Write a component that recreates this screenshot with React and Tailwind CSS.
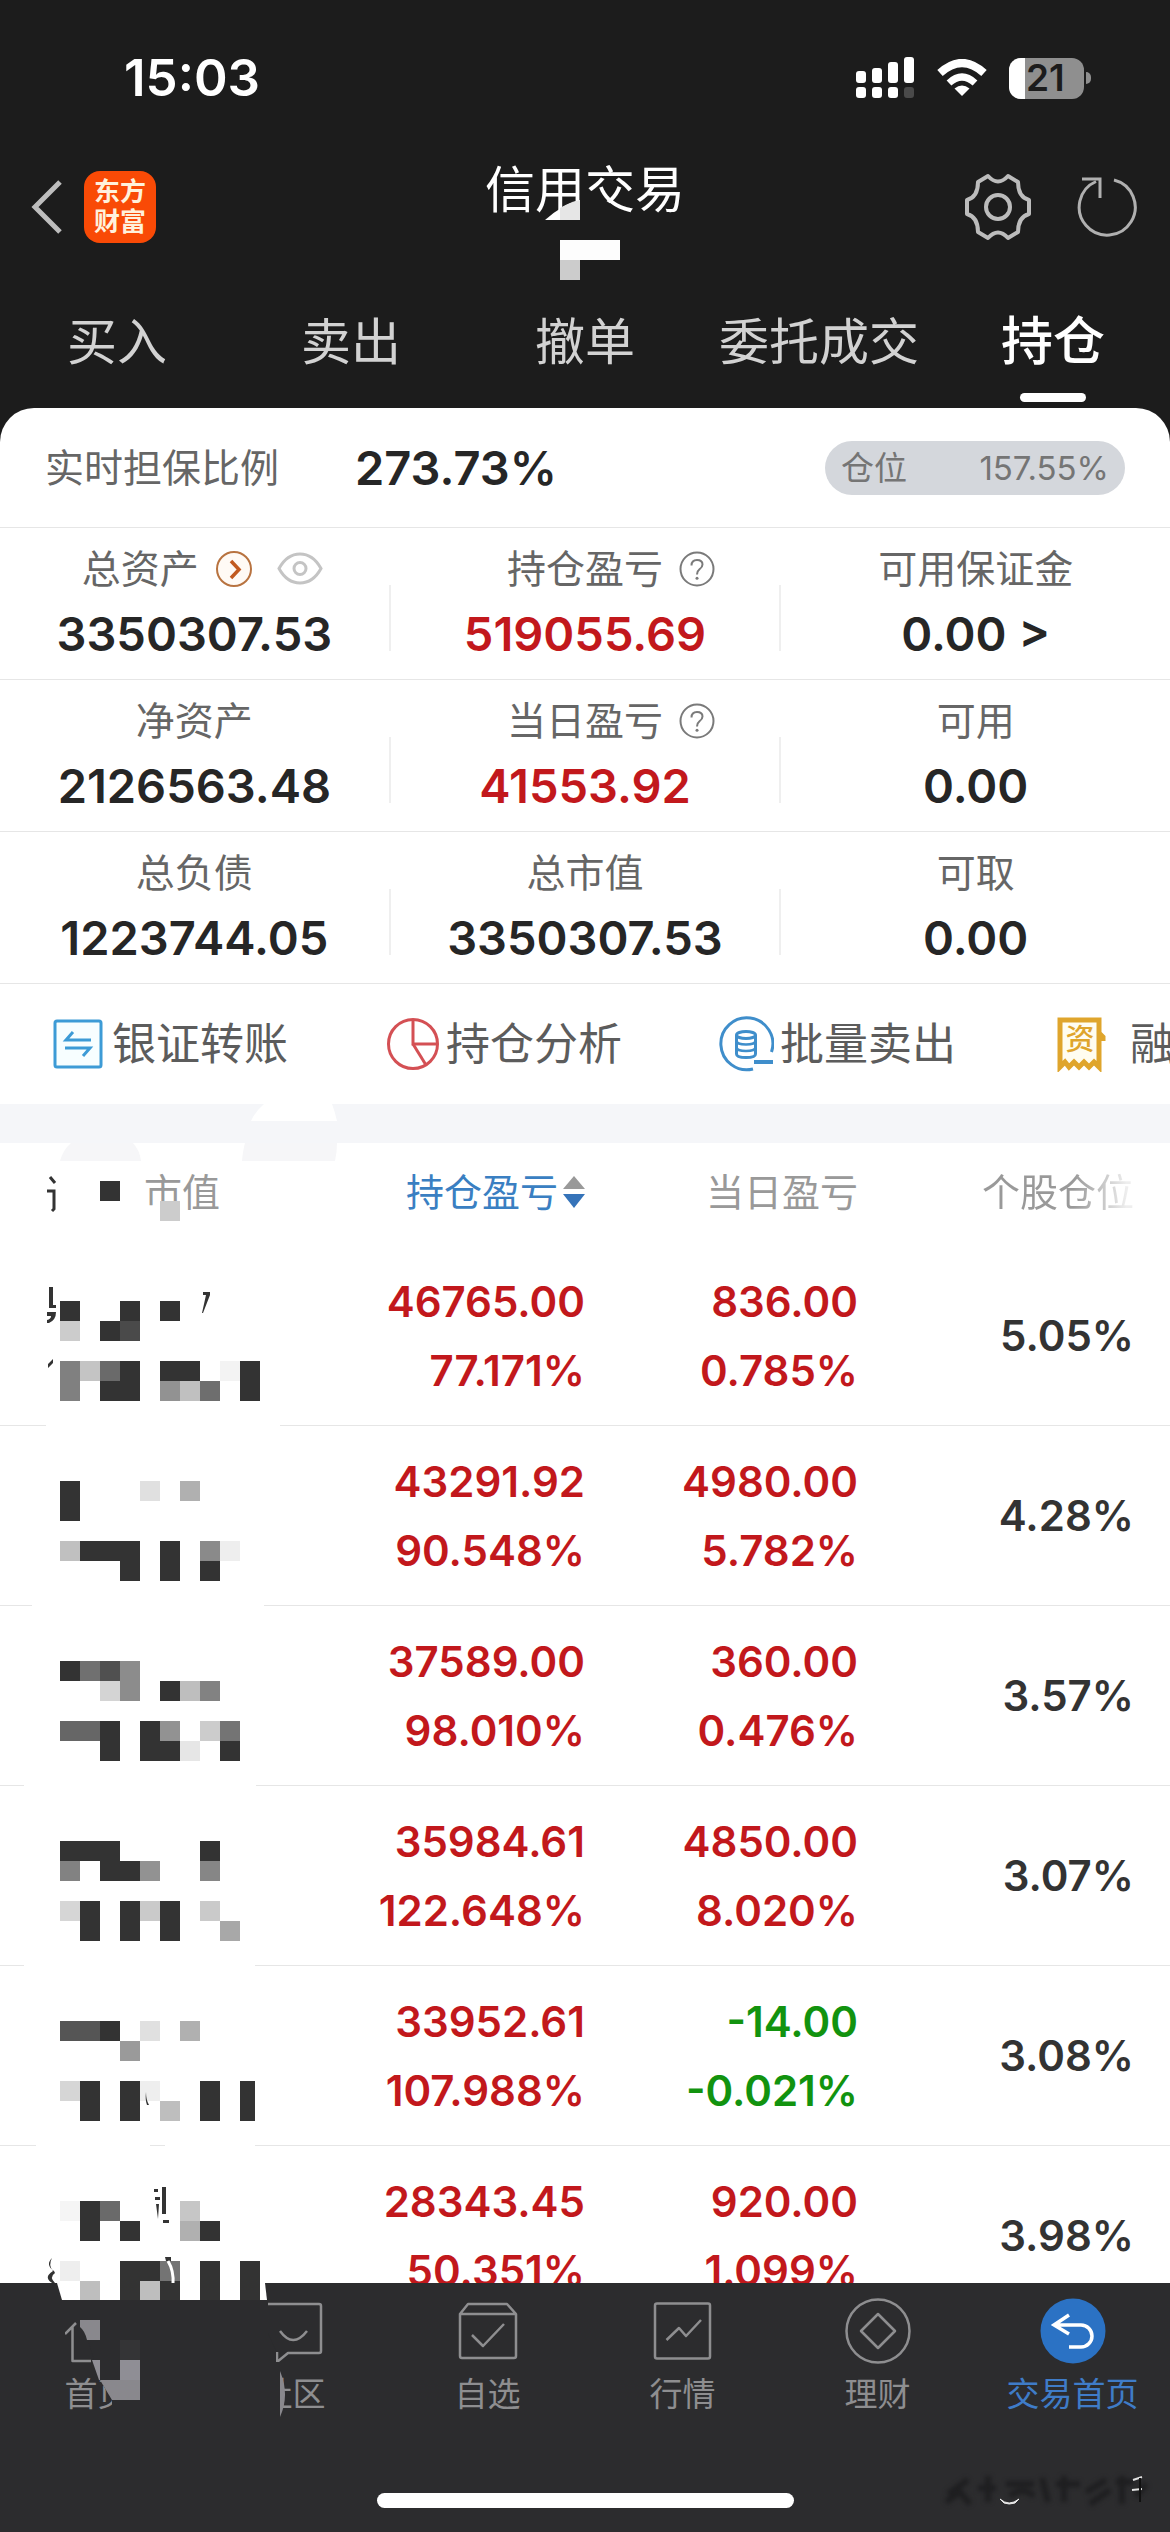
import React from 'react';

const TABS = ['买入', '卖出', '撤单', '委托成交', '持仓'];

const STATS = [
  [
    { label: '总资产', value: '3350307.53', kind: 'assets' },
    { label: '持仓盈亏', value: '519055.69', kind: 'help', red: true },
    { label: '可用保证金', value: '0.00 >' },
  ],
  [
    { label: '净资产', value: '2126563.48' },
    { label: '当日盈亏', value: '41553.92', kind: 'help', red: true },
    { label: '可用', value: '0.00' },
  ],
  [
    { label: '总负债', value: '1223744.05' },
    { label: '总市值', value: '3350307.53' },
    { label: '可取', value: '0.00' },
  ],
];

// Mosaic cells: [column, row, width in cells, colour] on a 20px lattice.
const D = '#333333';
const HOLDINGS = [
  {
    profit: '46765.00', profitPct: '77.171%', day: '836.00', dayPct: '0.785%', weight: '5.05%',
    lines: [[0, 46], [280, 290]],
    cells: [
      [0, 0, 1, D], [3, 0, 1, D], [5, 0, 1, D],
      [0, 1, 1, '#cccccc'], [2, 1, 1, D], [3, 1, 1, '#4a4a4a'],
      [0, 3, 1, '#808080'], [1, 3, 1, '#c4c4c4'], [2, 3, 1, '#6a6a6a'], [3, 3, 1, D], [5, 3, 2, D], [8, 3, 1, '#f3f3f3'], [9, 3, 1, D],
      [0, 4, 1, '#808080'], [2, 4, 2, D], [5, 4, 1, '#929292'], [6, 4, 1, '#c0c0c0'], [7, 4, 1, '#6e6e6e'], [9, 4, 1, D],
    ],
    scraps: 'M49 41h4v18h3v3h-7z M47 66h9q0 8-7 11h-2v-3q4-1 4-4h-4z M53 113v4l-5 5v-4z M203 46h7v3l-7 18h-1l4-18h-3z',
  },
  {
    profit: '43291.92', profitPct: '90.548%', day: '4980.00', dayPct: '5.782%', weight: '4.28%',
    lines: [[0, 32], [264, 290]],
    cells: [
      [0, 0, 1, D], [4, 0, 1, '#e0e0e0'], [6, 0, 1, '#b0b0b0'],
      [0, 1, 1, D],
      [0, 3, 1, '#c0c0c0'], [1, 3, 3, D], [5, 3, 1, D], [7, 3, 1, '#8a8a8a'], [8, 3, 1, '#eeeeee'],
      [3, 4, 1, D], [5, 4, 1, D], [7, 4, 1, D],
    ],
  },
  {
    profit: '37589.00', profitPct: '98.010%', day: '360.00', dayPct: '0.476%', weight: '3.57%',
    lines: [[0, 24], [256, 290]],
    cells: [
      [0, 0, 1, D], [1, 0, 1, '#707070'], [2, 0, 1, '#505050'], [3, 0, 1, '#8c8c8c'],
      [2, 1, 1, '#d4d4d4'], [3, 1, 1, '#8c8c8c'], [5, 1, 1, D], [6, 1, 1, '#bebebe'], [7, 1, 1, '#828282'],
      [0, 3, 2, '#666666'], [2, 3, 1, D], [4, 3, 1, D], [5, 3, 1, '#929292'], [7, 3, 1, '#cccccc'], [8, 3, 1, '#747474'],
      [2, 4, 1, D], [4, 4, 2, D], [6, 4, 1, '#e6e6e6'], [8, 4, 1, D],
    ],
  },
  {
    profit: '35984.61', profitPct: '122.648%', day: '4850.00', dayPct: '8.020%', weight: '3.07%',
    lines: [[0, 24], [255, 290]],
    cells: [
      [0, 0, 3, D], [7, 0, 1, D],
      [0, 1, 1, '#828282'], [2, 1, 2, D], [4, 1, 1, '#929292'], [7, 1, 1, '#868686'],
      [0, 3, 1, '#d6d6d6'], [1, 3, 1, D], [3, 3, 1, D], [4, 3, 1, '#cacaca'], [5, 3, 1, D], [7, 3, 1, '#cacaca'],
      [1, 4, 1, D], [3, 4, 1, D], [5, 4, 1, D], [8, 4, 1, '#a8a8a8'],
    ],
  },
  {
    profit: '33952.61', profitPct: '107.988%', day: '-14.00', dayPct: '-0.021%', weight: '3.08%', down: true,
    lines: [[0, 36], [150, 165], [255, 290]],
    cells: [
      [0, 0, 2, '#555555'], [2, 0, 1, D], [4, 0, 1, '#e0e0e0'], [6, 0, 1, '#b0b0b0'],
      [3, 1, 1, '#9a9a9a'],
      [0, 3, 1, '#d6d6d6'], [1, 3, 1, D], [3, 3, 1, D], [4, 3, 1, '#eeeeee'], [7, 3, 1, D], [9, 3, 0.75, D],
      [1, 4, 1, D], [3, 4, 1, D], [5, 4, 1, '#bebebe'], [7, 4, 1, D], [9, 4, 0.75, D],
    ],
    scraps: 'M146 126q0 8 3 13h-2q-2-5-1-13z',
  },
  {
    profit: '28343.45', profitPct: '50.351%', day: '920.00', dayPct: '1.099%', weight: '3.98%',
    lines: [],
    cells: [
      [0, 0, 1, '#f5f5f5'], [1, 0, 1, D], [2, 0, 1, '#6a6a6a'], [6, 0, 1, '#c6c6c6'],
      [1, 1, 1, D], [3, 1, 1, D], [6, 1, 1, '#b0b0b0'], [7, 1, 1, D],
      [0, 3, 1, '#eeeeee'], [3, 3, 2, D], [5, 3, 1, '#747474'], [7, 3, 1, D], [9, 3, 1, D],
      [1, 4, 1, '#bebebe'], [3, 4, 1, D], [4, 4, 1, '#bebebe'], [5, 4, 1, D], [7, 4, 1, D], [9, 4, 1, D],
    ],
    scraps: 'M154 43h4v3h-4z M155 51h5v3h-5z M156 58h3l-1 15z M162 41h4v27h-4z M163 74h6v3h-6z M52 112q-7 7 2 13l1 2q-6 4 0 10l3 1h-4q-12-6-1-13-5-6-1-13z M165 111h6v4h-5z',
    tear: 'M168 115q6 10 5 23',
  },
];

function SignalIcon() {
  return (
    <svg className="h-[42px] w-[60px]" viewBox="0 0 60 42" fill="#fff" aria-hidden="true">
      <rect x="1" y="14" width="10" height="12" rx="3" />
      <rect x="17" y="11" width="10" height="15" rx="3" />
      <rect x="33" y="5" width="10" height="21" rx="3" />
      <rect x="49" y="0" width="10" height="26" rx="3" />
      <rect x="1" y="30" width="10" height="11" rx="3" />
      <rect x="17" y="30" width="10" height="11" rx="3" />
      <rect x="33" y="30" width="10" height="11" rx="3" />
      <rect x="49" y="30" width="10" height="11" rx="3" fill="#4a4a4a" />
    </svg>
  );
}

function WifiIcon() {
  return (
    <svg className="h-[38px] w-[50px]" viewBox="0 0 50 38" aria-hidden="true">
      <path d="M3 14 Q25 -6 47 14" fill="none" stroke="#fff" strokeWidth="8" />
      <path d="M12 24 Q25 12 38 24" fill="none" stroke="#fff" strokeWidth="7" />
      <path d="M25 37 L17.5 29.5 Q25 23.5 32.5 29.5z" fill="#fff" />
    </svg>
  );
}

function Battery() {
  return (
    <div className="flex items-center gap-[2px]">
      <div className="flex h-[41px] w-[75px] items-center rounded-[12px] bg-[#8f8f8f]">
        <div className="h-full w-4 shrink-0 rounded-l-[12px] bg-white" />
        <span className="pl-px text-[37px] leading-[48px] font-semibold text-[#1c1c1c]">21</span>
      </div>
      <div className="h-3 w-[5px] rounded-r-full bg-[#8f8f8f]" />
    </div>
  );
}

function GearIcon() {
  return (
    <svg className="size-[70px]" viewBox="-35 -35 70 70" fill="none" stroke="#bcbcbc" strokeWidth="4" strokeLinejoin="round" aria-hidden="true">
      <path d="M-10 -31 Q0 -20 10 -31 L20 -25 Q20 -10 31 -7 V7 Q20 10 20 25 L10 31 Q0 20 -10 31 L-20 25 Q-20 10 -31 7 V-7 Q-20 -10 -20 -25z" />
      <circle r="12" />
    </svg>
  );
}

function RefreshIcon() {
  return (
    <svg className="size-[64px]" viewBox="-32 -32 64 64" fill="none" stroke="#b0b0b0" strokeWidth="3" aria-hidden="true">
      <path d="M7 -27 A28 28 0 1 1 -11 -25.5" />
      <path d="M-25 -28 H-7 V-9" />
    </svg>
  );
}

function QuestionIcon() {
  return (
    <svg className="size-[36px]" viewBox="0 0 36 36" fill="none" stroke="#7a7a7a" strokeWidth="2" aria-hidden="true">
      <circle cx="18" cy="18" r="16.5" />
      <path d="M12.5 14.5 Q12.5 9 18 9 Q23.5 9 23.5 13.5 Q23.5 16 20.5 18.3 Q18 20.2 18 23.5" />
      <circle cx="18" cy="27.3" r="1.5" fill="#7a7a7a" stroke="none" />
    </svg>
  );
}

function StatLabel({ label, kind }) {
  if (kind === 'assets') {
    return (
      <div className="flex h-[50px] items-center pl-4">
        <span className="text-[39px] leading-[50px] text-[#666]">{label}</span>
        <button type="button" aria-label="资产详情" className="ml-4">
          <svg className="size-[38px]" viewBox="0 0 38 38" fill="none" aria-hidden="true">
            <circle cx="19" cy="19" r="17" stroke="#b87340" strokeWidth="2" fill="#fffaf5" />
            <path d="M16 11 L24 19.5 L16 28" stroke="#c25a20" strokeWidth="3.5" />
          </svg>
        </button>
        <button type="button" aria-label="隐藏金额" className="ml-6">
          <svg className="h-[36px] w-[46px]" viewBox="0 0 46 36" fill="none" stroke="#c4c4c4" strokeWidth="3" aria-hidden="true">
            <path d="M2 17.5 Q10 3 23 3 Q36 3 44 17.5 Q36 32 23 32 Q10 32 2 17.5z" />
            <circle cx="23" cy="17.5" r="6" />
          </svg>
        </button>
      </div>
    );
  }
  return (
    <div className="grid h-[50px] w-full grid-cols-[1fr_auto_1fr] items-center">
      <span />
      <span className="text-[39px] leading-[50px] text-[#666]">{label}</span>
      {kind === 'help' ? (
        <button type="button" aria-label={label + '说明'} className="ml-4 justify-self-start">
          <QuestionIcon />
        </button>
      ) : (
        <span />
      )}
    </div>
  );
}

function Stat({ item }) {
  return (
    <div className="flex flex-col items-center gap-[10px] pt-4 pb-[15px]">
      <StatLabel label={item.label} kind={item.kind} />
      <div className={item.red ? 'text-[47px] leading-[60px] font-semibold text-[#c2181c]' : 'text-[47px] leading-[60px] font-semibold text-[#262626]'}>
        {item.value}
      </div>
    </div>
  );
}

function StatRow({ items }) {
  return (
    <div className="grid grid-cols-[1fr_2px_1fr_2px_1fr] border-b border-[#e6e6e6]">
      <Stat item={items[0]} />
      <div className="mt-[57px] h-[66px] bg-[#efefef]" />
      <Stat item={items[1]} />
      <div className="mt-[57px] h-[66px] bg-[#efefef]" />
      <Stat item={items[2]} />
    </div>
  );
}

function TransferIcon() {
  return (
    <svg className="size-[56px]" viewBox="0 0 56 56" fill="none" stroke="#3d9bd6" strokeWidth="3" aria-hidden="true">
      <rect x="5" y="5" width="46" height="46" rx="2" fill="#f7feff" />
      <path d="M41 24 H16 L23 16" />
      <path d="M15 32 H40 L33 40" />
    </svg>
  );
}

function PieIcon() {
  return (
    <svg className="size-[56px]" viewBox="0 0 56 56" fill="none" stroke="#d45054" strokeWidth="3" aria-hidden="true">
      <circle cx="29" cy="28" r="24.5" />
      <path d="M29 4 V28 H53" />
      <path d="M29 28 L42 49" />
    </svg>
  );
}

function CoinsIcon() {
  return (
    <svg className="size-[56px]" viewBox="0 0 56 56" fill="none" stroke="#3f8ecb" strokeWidth="3" aria-hidden="true">
      <path d="M53.5 36 A26 26 0 1 0 35 53" />
      <path d="M36 46 H55" strokeWidth="4" />
      <ellipse cx="28" cy="19" rx="9.5" ry="3.5" />
      <path d="M18.500 19 V38 Q18.5 41.5 28 41.5 Q37.5 41.5 37.5 38 V19" />
      <path d="M18.5 25 Q19 28.500 28 28.5 Q37 28.5 37.5 25" strokeWidth="2.5" />
      <path d="M18.5 31.5 Q19 35 28 35 Q37 35 37.5 31.5" strokeWidth="2.5" />
    </svg>
  );
}

function CapitalIcon() {
  return (
    <span className="relative block size-[56px]">
      <svg className="size-[56px]" viewBox="0 0 56 56" fill="none" stroke="#dfa52c" strokeWidth="5" aria-hidden="true">
        <path d="M47 16 V4 H8 V51 L13 46 L17 51 L22 46 L27 51 L32 46 L37 51 L42 46 L47 51 V17 L51 21 V25" fill="#fffdf0" />
      </svg>
      <span className="absolute inset-x-0 top-2 text-center text-[29px] leading-8 font-medium text-[#dfa52c]">资</span>
    </span>
  );
}

function QuickAction({ icon, label, gap }) {
  return (
    <button type="button" className={'flex w-[334px] shrink-0 items-center ' + (gap || 'gap-[6px]')}>
      {icon}
      <span className="text-[44px] leading-[60px] whitespace-nowrap text-[#5c5c5c]">{label}</span>
    </button>
  );
}

function MaskedName({ row }) {
  return (
    <svg className="block h-[180px] w-[290px]" viewBox="0 0 290 180" shapeRendering="crispEdges" role="img" aria-label="已隐藏">
      {row.lines.map(([from, to]) => (
        <rect key={from} x={from} y="179" width={to - from} height="1" fill="#e6e6e6" />
      ))}
      {row.cells.map(([x, y, w, fill]) => (
        <rect key={x + '-' + y} x={60 + x * 20} y={55 + y * 20} width={w * 20} height="20" fill={fill} />
      ))}
      {row.scraps && <path d={row.scraps} fill="#333" shapeRendering="auto" />}
      {row.tear && <path d={row.tear} fill="none" stroke="#fff" strokeWidth="3" shapeRendering="auto" />}
    </svg>
  );
}

function HoldingRow({ row }) {
  const dayColor = row.down ? 'text-[#12930f]' : 'text-[#c2181c]';
  return (
    <tr className="h-[180px]">
      <td className="p-0">
        <MaskedName row={row} />
      </td>
      <td className="border-b border-[#e6e6e6] p-0 text-right leading-[69px] text-[#c2181c]">
        <div>{row.profit}</div>
        <div>{row.profitPct}</div>
      </td>
      <td className={'border-b border-[#e6e6e6] p-0 text-right leading-[69px] ' + dayColor}>
        <div>{row.day}</div>
        <div>{row.dayPct}</div>
      </td>
      <td className="border-b border-[#e6e6e6] p-0 pr-9 text-right text-[#333]">{row.weight}</td>
    </tr>
  );
}

function NavItem({ label, active, children }) {
  return (
    <a href="#" className={'flex flex-col items-center gap-[10px] pt-[15px] ' + (active ? 'text-[#3f7cc8]' : 'text-[#8e8e90]')}>
      <svg className="size-[66px]" viewBox="0 0 66 66" fill="none" stroke="#8e8e90" strokeWidth="2.5" strokeLinejoin="round" aria-hidden="true">
        {children}
      </svg>
      <span className="text-[33px] leading-[40px]">{label}</span>
    </a>
  );
}

export default function App() {
  return (
    <div className="flex h-screen flex-col bg-[#1c1c1c] font-['Inter','Noto_Sans_CJK_SC',sans-serif]">
      <header className="shrink-0 text-white">
        <div className="flex h-[156px] items-center justify-between pr-[79px] pl-[124px]">
          <span className="text-[51px] leading-[60px] font-semibold">15:03</span>
          <div className="flex items-center gap-[22px]">
            <SignalIcon />
            <WifiIcon />
            <Battery />
          </div>
        </div>

        <div className="grid h-[102px] grid-cols-[1fr_auto_1fr]">
          <div className="flex items-center gap-[22px] pl-[30px]">
            <button type="button" aria-label="返回">
              <svg className="h-[56px] w-[32px]" viewBox="0 0 32 56" fill="none" stroke="#bdbdbd" strokeWidth="5" aria-hidden="true">
                <path d="M30 3 L5 28 L30 53" />
              </svg>
            </button>
            <a href="#" className="flex size-[72px] flex-col items-center justify-center rounded-[16px] bg-[#f94a06] text-[26px] leading-[30px] font-bold text-[#fff1dc]">
              <span>东方</span>
              <span>财富</span>
            </a>
          </div>
          <div className="relative">
            <h1 className="text-[50px] leading-[68px]">信用交易</h1>
            <svg className="absolute top-[44px] left-[60px] h-[80px] w-[90px]" viewBox="0 0 90 80" aria-hidden="true">
              <path d="M0 20 Q18 4 35 0 V20z" fill="#fff" />
              <path d="M15 8 Q25 2 35 0 V20 H15z" fill="#e6e6e6" />
              <path d="M35 0 H60 L79 13 V22 H35z" fill="#1c1c1c" />
              <rect x="15" y="40" width="60" height="20" fill="#fdfdfd" />
              <rect x="15" y="60" width="20" height="20" fill="#cccccc" />
            </svg>
          </div>
          <div className="flex items-center justify-end gap-[42px] pr-[31px]">
            <button type="button" aria-label="设置"><GearIcon /></button>
            <button type="button" aria-label="刷新"><RefreshIcon /></button>
          </div>
        </div>

        <nav className="grid grid-cols-5 pt-12 pb-[6px]">
          {TABS.map((tab) => {
            const active = tab === '持仓';
            return (
              <a key={tab} href="#" className="flex flex-col items-center gap-[15px]">
                <span className={active ? 'text-[52px] leading-[72px] font-medium text-white' : 'text-[50px] leading-[72px] text-[#d2d2d2]'}>{tab}</span>
                <span className={active ? 'h-[9px] w-[66px] rounded-full bg-white' : 'h-[9px] w-[66px]'} />
              </a>
            );
          })}
        </nav>
      </header>

      <main className="min-h-0 flex-1 overflow-x-hidden overflow-y-auto rounded-t-[34px] bg-white [scrollbar-width:none]">
        <section className="flex h-[120px] items-center border-b border-[#e6e6e6] pr-[45px] pl-[45px]">
          <span className="text-[39px] leading-[50px] text-[#666]">实时担保比例</span>
          <span className="ml-[76px] text-[47px] leading-[60px] font-semibold text-[#262626]">273.73%</span>
          <div className="ml-auto flex h-[54px] w-[300px] items-center justify-between rounded-full bg-[#d4d7dc] px-4 text-[33px] leading-[54px] text-[#757575]">
            <span>仓位</span>
            <span>157.55%</span>
          </div>
        </section>

        <section>
          {STATS.map((items) => (
            <StatRow key={items[0].label} items={items} />
          ))}
        </section>

        <section className="flex h-[120px] overflow-hidden pl-[50px]">
          <QuickAction icon={<TransferIcon />} label="银证转账" />
          <QuickAction icon={<PieIcon />} label="持仓分析" />
          <QuickAction icon={<CoinsIcon />} label="批量卖出" />
          <QuickAction icon={<CapitalIcon />} label="融" gap="gap-[22px]" />
        </section>

        <div className="relative h-[39px] bg-[#f5f6f9]">
          <svg className="absolute top-0 left-0 h-[57px] w-[350px]" viewBox="0 0 350 57" aria-hidden="true">
            <path d="M251 17 Q255 8 264 0 H332 Q335 8 337 17z" fill="#fff" />
            <path d="M60 57 Q63 46 71 39 H133 Q140 47 141 57z" fill="#f6f6f8" />
            <path d="M242 57 Q243 46 245 39 H337 Q337 48 335 57z" fill="#f6f6f8" />
          </svg>
        </div>

        <table className="w-full table-fixed border-separate border-spacing-0 text-[42px] font-semibold">
          <colgroup>
            <col className="w-[290px]" />
            <col />
            <col className="w-[273px]" />
            <col className="w-[312px]" />
          </colgroup>
          <thead>
            <tr className="h-[103px] text-[38px] leading-[50px] text-[#999]">
              <th className="p-0 text-left font-normal">
                <div className="relative flex h-[103px] items-center pb-[6px] pl-[144px]">
                  <span>市值</span>
                  <svg className="absolute top-0 left-0 h-[103px] w-[220px]" viewBox="0 0 220 103" aria-hidden="true">
                    <path d="M50 34 L55 40 M47 48 H54 V66 L52 68" fill="none" stroke="#333" strokeWidth="3" />
                    <rect x="100" y="38" width="20" height="20" fill="#333" />
                    <rect x="160" y="58" width="20" height="20" fill="#ccc" />
                  </svg>
                </div>
              </th>
              <th className="p-0 pb-[6px] font-normal">
                <button type="button" className="ml-auto flex items-center gap-[5px] text-[#3a7fc2]">
                  持仓盈亏
                  <svg className="h-[32px] w-[22px]" viewBox="0 0 22 32" aria-hidden="true">
                    <path d="M11 0 L22 13 H0z" fill="#999" />
                    <path d="M11 32 L22 18 H0z" fill="#3573b9" />
                  </svg>
                </button>
              </th>
              <th className="p-0 pb-[6px] text-right font-normal">当日盈亏</th>
              <th className="p-0 pr-9 pb-[6px] text-right font-normal">
                <span className="bg-linear-to-r from-[#999] from-60% to-[#eee] to-95% bg-clip-text text-transparent">个股仓位</span>
              </th>
            </tr>
          </thead>
          <tbody>
            {HOLDINGS.map((row) => (
              <HoldingRow key={row.profit} row={row} />
            ))}
          </tbody>
        </table>
      </main>

      <footer className="relative shrink-0 bg-[#2c2c2e]">
        <nav className="grid h-[210px] grid-cols-6">
          <NavItem label="首页">
            <path d="M0 36 L11 25 M7.5 28 V63 H26" />
          </NavItem>
          <NavItem label="社区">
            <path d="M5 6 H59 Q61 6 61 8 V53 Q61 55 59 55 H28 L17 64 V54" />
            <path d="M20 33 Q33 51 47 33" />
          </NavItem>
          <NavItem label="自选">
            <path d="M5 16 L13 6 H52 L61 16 V58 Q61 60 59 60 H7 Q5 60 5 58z M5 16 H61" />
            <path d="M17 37 L28 48 L49 26" />
          </NavItem>
          <NavItem label="行情">
            <rect x="5" y="5.5" width="55" height="55" rx="2" />
            <path d="M16.5 42 L29 30 L36 38 L51 22" />
          </NavItem>
          <NavItem label="理财">
            <circle cx="33" cy="33" r="31.5" />
            <path d="M33 16 L50 33 L33 50 L16 33z" />
          </NavItem>
          <NavItem label="交易首页" active>
            <circle cx="33" cy="33" r="32.5" fill="#2b72c4" stroke="none" />
            <path d="M29 17 L14 27 L29 36 M14 27 H41 A11 11 0 0 1 41 49 H29" stroke="#fff" strokeWidth="3.5" strokeLinejoin="miter" />
          </NavItem>
        </nav>

        <svg className="pointer-events-none absolute top-0 left-0 h-[150px] w-[300px]" viewBox="0 0 300 150" aria-hidden="true">
          <path d="M57 0 H265 L267 17 H62z" fill="#fff" />
          <path d="M80 0 h20 v17 h-20z M140 0 h20 v17 h-20z" fill="#bebebe" />
          <path d="M120 0 h20 v17 h-20z M160 0 h20 v17 h-20z M200 0 h20 v17 h-20z M240 0 h20 v17 h-20z" fill="#333" />
          <path d="M88 17 V57 L100 97 L112 117 V140 H280 V79 H276 V68 L268 50 V17z" fill="#2c2c2e" />
          <path d="M80 37 H100 V57 H87 Q85 48 80 44z" fill="#89888d" />
          <path d="M120 57 h20 v20 h-20z" fill="#343436" />
          <path d="M120 77 h20 v20 h-20z" fill="#8f8e95" />
          <path d="M92 77 h8 v20 h-1z" fill="#8f8e95" />
          <path d="M100 97 H140 V117 H112z" fill="#89888d" />
          <path d="M280 88 Q290 112 280 134z" fill="#89888d" />
        </svg>

        <div className="flex h-[39px] justify-center">
          <div className="h-[15px] w-[417px] rounded-full bg-white" />
        </div>

        <svg className="pointer-events-none absolute right-0 bottom-0 h-[70px] w-[240px]" viewBox="0 0 240 70" fill="none" aria-hidden="true">
          <path className="blur-[2px]" d="M18 32 L38 18 M16 40 L30 30 L40 42 M48 26 H66 M58 14 V40 M76 22 H104 M80 34 Q92 24 104 34 M112 16 L118 40 M126 22 H150 M134 14 V40 M156 30 L176 18 M160 42 L180 28 M186 20 H204 M192 14 V42 M206 34 L216 22" stroke="#1e1e20" strokeWidth="6" />
          <path d="M70 37 Q79 45 89 37 L85 41 Q79 43 74 41z" fill="#e8e8e8" stroke="#e8e8e8" strokeWidth="1" />
          <path d="M203 18 L212 15 M202 28 L212 27" stroke="#e0e0e0" strokeWidth="2" />
          <path d="M210 16 V40" stroke="#111" strokeWidth="2" />
        </svg>
      </footer>
    </div>
  );
}
